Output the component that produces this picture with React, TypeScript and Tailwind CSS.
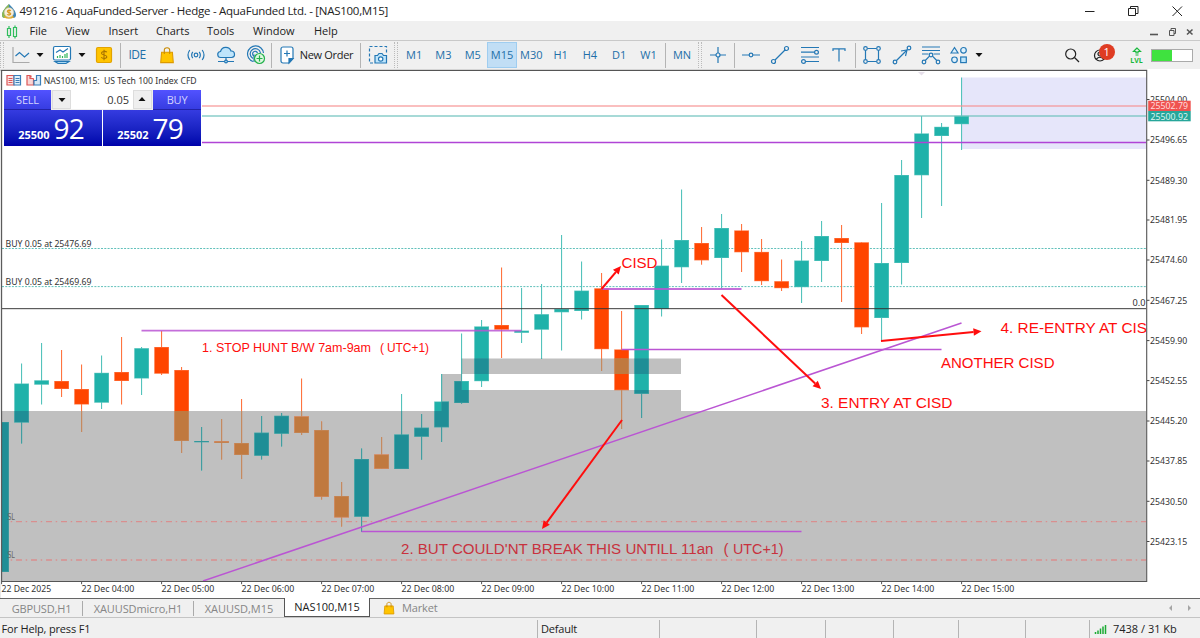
import { ReactNode } from 'react';
import clsx from 'clsx';

// center x, high, body top, body bottom, low, direction (1 = up)
const CANDLES: number[][] = [
  [1.5, 422, 422, 572, 572, 1],
  [21.5, 363.5, 383.5, 422.5, 443.5, 1],
  [41.5, 343, 380.3, 384.7, 404.5, 1],
  [61.5, 350, 381, 389, 397, 0],
  [81.5, 364.5, 389, 404.5, 432, 0],
  [101.5, 355.5, 372.8, 402.7, 409, 1],
  [121.5, 337, 372, 381, 404.5, 0],
  [141.5, 347, 348.2, 378.5, 395, 1],
  [161.5, 331, 347, 373.7, 375, 0],
  [181.5, 367, 370, 441, 453, 0],
  [201.5, 427, 441, 442.2, 470.5, 1],
  [221.5, 419, 441.3, 443, 459.5, 0],
  [241.5, 399, 443, 455, 479, 0],
  [261.5, 416, 432.7, 455.7, 459.5, 1],
  [281.5, 413, 415.8, 433.7, 446.5, 1],
  [301.5, 378.5, 416.4, 433, 435, 0],
  [321.5, 421.5, 430, 496.7, 499.5, 0],
  [341.5, 482, 496, 517.4, 526.5, 0],
  [361.5, 448.5, 459, 516.7, 532, 1],
  [381.5, 437, 454.5, 468.7, 468.7, 0],
  [401.5, 394, 434.5, 469, 469, 1],
  [421.5, 414, 427.7, 436.7, 459.7, 1],
  [441.5, 374, 401.5, 427.3, 442, 1],
  [461.5, 333.5, 381, 403, 403.7, 1],
  [481.5, 320, 326.4, 381.2, 387, 1],
  [501.5, 267.5, 325, 329.7, 358, 0],
  [521.5, 288, 330.6, 332.8, 343, 1],
  [541.5, 284, 314.2, 329.7, 359, 1],
  [561.5, 235, 309, 312.3, 350.5, 1],
  [581.5, 261.5, 290.6, 311, 319.5, 1],
  [601.5, 273, 288.3, 349.2, 371, 0],
  [621.5, 311, 349.4, 390.2, 429, 0],
  [641.5, 305, 305, 393.8, 418, 1],
  [661.5, 239.5, 265.6, 309, 316.5, 1],
  [681.5, 189.5, 240, 267.3, 283, 1],
  [701.5, 227, 243, 260.4, 264.7, 0],
  [721.5, 214, 228, 258, 288.5, 1],
  [741.5, 224, 230.4, 252.3, 272, 0],
  [761.5, 239, 251.9, 281.2, 285, 0],
  [781.5, 259.5, 281.2, 288.2, 291, 0],
  [801.5, 241, 260.5, 287.2, 303, 1],
  [821.5, 221, 236, 261, 282, 1],
  [841.5, 225, 238, 243, 302, 0],
  [861.5, 242.3, 242.3, 327.4, 334, 0],
  [881.5, 203, 263, 318, 341, 1],
  [901.5, 160, 175, 263, 284.5, 1],
  [921.5, 116, 133.4, 175.3, 218, 1],
  [941.5, 123, 126.8, 136, 206, 1],
  [961.5, 77.5, 115.8, 124.2, 150, 1],
];

const PRICES: [string, number][] = [
  ['25504.00', 99.5],
  ['25496.65', 140],
  ['25489.30', 180.3],
  ['25481.95', 220],
  ['25474.60', 260],
  ['25467.25', 300.3],
  ['25459.90', 340.6],
  ['25452.55', 380.6],
  ['25445.20', 421],
  ['25437.85', 461],
  ['25430.50', 501.3],
  ['25423.15', 541.5],
];

const TIMES = ['2025', '04:00', '05:00', '06:00', '07:00', '08:00', '09:00', '10:00', '11:00', '12:00', '13:00', '14:00', '15:00'];

// stepped session zone behind the candles
const ZONE = 'M2 411H441.6V374H461.6V358.4H681V374H461.6V390H681V411H1146V581H2Z';

type LabelProps = { x: number; y: number; w: number; size?: number; fill?: string; family?: string; children: string };

function Label({ x, y, w, size = 9, fill = '#333', family = 'Noto Sans, sans-serif', children }: LabelProps) {
  return (
    <text x={x} y={y} fontSize={size} fill={fill} textLength={w} lengthAdjust="spacingAndGlyphs" fontFamily={family}>
      {children}
    </text>
  );
}

function Note(props: LabelProps) {
  return <Label size={14.9} fill="#ff0d0d" family="Liberation Sans, Arial, sans-serif" {...props} />;
}

function Candles({ up, down, upWick, downWick }: { up: string; down: string; upWick: string; downWick: string }) {
  return (
    <g>
      {CANDLES.map(([x, high, top, bottom, low, dir]) => {
        const wick = dir ? upWick : downWick;
        return (
          <g key={x}>
            <rect x={x - 0.5} y={high} width={1.1} height={low - high} fill={wick} />
            <rect x={x - 7.3} y={top} width={14.8} height={bottom - top} fill={wick} />
            <rect x={x - 6.5} y={top + 0.6} width={13.2} height={Math.max(bottom - top - 1.2, 0.4)} fill={dir ? up : down} />
          </g>
        );
      })}
    </g>
  );
}

function Arrow({ x1, y1, x2, y2 }: { x1: number; y1: number; x2: number; y2: number }) {
  const len = Math.hypot(x2 - x1, y2 - y1);
  const ux = (x2 - x1) / len;
  const uy = (y2 - y1) / len;
  const bx = x2 - ux * 8;
  const by = y2 - uy * 8;
  return (
    <g fill="#ff0d0d" stroke="#ff0d0d">
      <line x1={x1} y1={y1} x2={bx} y2={by} strokeWidth={2} />
      <polygon stroke="none" points={`${x2},${y2} ${bx - uy * 3.8},${by + ux * 3.8} ${bx + uy * 3.8},${by - ux * 3.8}`} />
    </g>
  );
}

function Chart() {
  return (
    <svg width="1200" height="529" viewBox="0 69 1200 529" className="block">
      <defs>
        <clipPath id="zone">
          <path d={ZONE} />
        </clipPath>
        <clipPath id="plot">
          <rect x="2" y="71" width="1144.3" height="510" />
        </clipPath>
      </defs>
      <rect x="0" y="69" width="1200" height="529" fill="#fff" />
      <g clipPath="url(#plot)">
        <path d={ZONE} fill="#c0c0c0" />
        <rect x="961.6" y="77.5" width="185" height="71.5" fill="#e6e6fa" />
        <path d="M918 72h7l-3.5 3.5z" fill="#e6dfea" />
        <g stroke="#62c1bb" strokeDasharray="2 1.3">
          <path d="M2 248.5H1146" />
          <path d="M2 286.6H1146" />
        </g>
        <g stroke="#d98f8f" strokeWidth="1.3" strokeDasharray="6 3.7 1.5 3.8">
          <path d="M1 521.6H1146" />
          <path d="M1 560H1146" />
        </g>
        <Candles up="#20b2aa" down="#ff4500" upWick="#54c3bc" downWick="#ff7440" />
        <g clipPath="url(#zone)">
          <Candles up="#1f8e96" down="#c0793f" upWick="#419da1" downWick="#c48a60" />
        </g>
        <rect x="202" y="105.2" width="944" height="1.6" fill="#f78f8f" fillOpacity="0.7" />
        <rect x="202" y="115.2" width="944" height="1.6" fill="#6cc2bc" fillOpacity="0.75" />
        <rect x="2" y="308" width="1144" height="1.2" fill="#333" fillOpacity="0.8" />
        <g stroke="#ba55d3" fill="none">
          <path d="M202 142.5H1146" strokeWidth="1.4" stroke="#b044d6" />
          <path d="M141.5 330.7H521.5M601.5 289H741.5" strokeWidth="1.8" strokeOpacity="0.85" />
          <path d="M621.5 349.5H941.5" strokeWidth="1.4" />
          <path d="M361.5 531.5H801.5" strokeWidth="1.5" />
          <path d="M203 581L961.5 323" strokeWidth="1.5" />
        </g>
        <Arrow x1={601.5} y1={289} x2={621} y2={266} />
        <Arrow x1={622} y1={420} x2={542} y2={529} />
        <Arrow x1={721.5} y1={295} x2={821} y2={389} />
        <Arrow x1={881} y1={341} x2={981.5} y2={331.3} />
        <Note x={621.5} y={267.7} w={36}>CISD</Note>
        <Note x={202} y={351.8} w={169} size={12.2}>1. STOP HUNT B/W 7am-9am</Note>
        <Note x={380} y={351.8} w={4} size={12.2}>(</Note>
        <Note x={387} y={351.8} w={42} size={12.2}>UTC+1)</Note>
        <Note x={401} y={554.3} w={312.5} fill="#c8323e">2. BUT COULD'NT BREAK THIS UNTILL 11an</Note>
        <Note x={723.5} y={554.3} w={5} fill="#c8323e">(</Note>
        <Note x={733} y={554.3} w={50.5} fill="#c8323e">UTC+1)</Note>
        <Note x={941} y={368} w={113.5}>ANOTHER CISD</Note>
        <Note x={821} y={408} w={131.5}>3. ENTRY AT CISD</Note>
        <Note x={1000.5} y={332.7} w={146.5}>4. RE-ENTRY AT CIS</Note>
        <Label x={5.5} y={246.7} w={86}>BUY 0.05 at 25476.69</Label>
        <Label x={5.5} y={284.8} w={86}>BUY 0.05 at 25469.69</Label>
        <Label x={7.5} y={520} w={7.5} fill="#666">SL</Label>
        <Label x={7.5} y={558.3} w={7.5} fill="#666">SL</Label>
        <Label x={1132.5} y={306} w={13}>0.0</Label>
      </g>
      <path d="M0 70.4H1146.700V581.500H1.600V70.400" fill="none" stroke="#555" strokeWidth="1.1" />
      <path d="M0 69V598" stroke="#e4e4e4" strokeWidth="1.6" />

      {PRICES.map(([p, y]) => (
        <g key={p}>
          <path d={`M1147 ${y}h2.500`} stroke="#444" />
          <Label x={1150} y={y + 3.3} w={37.3}>{p}</Label>
        </g>
      ))}
      <rect x="1148.2" y="100.7" width="42.5" height="10.3" fill="#ef5350" />
      <rect x="1148.2" y="111" width="42.5" height="10.3" fill="#26a69a" />
      <Label x={1150.5} y={109.4} w={37.5} fill="#ffdada">25502.79</Label>
      <Label x={1150.5} y={119.6} w={37.5} fill="#d8f5f1">25500.92</Label>

      {TIMES.map((t, i) => (
        <g key={t}>
          <path d={`M${1.6 + i * 80} 582v2.200`} stroke="#555" />
          <Label x={1.5 + i * 80} y={592.4} w={i ? 52.7 : 49.7}>{`22 Dec ${t}`}</Label>
        </g>
      ))}

      {/* chart caption and its two toggles */}
      <g fill="none" strokeWidth="1.2">
        <path d="M14 75.5H7v9.500h7z" stroke="#dd5555" fill="#fbe4e4" />
        <path d="M14 75.5h6.500v9.500H14z" stroke="#3b7fb8" fill="#e2f0fa" />
        <path d="M8.500 78.500h4M8.500 80.500h4M8.500 82.500h4" stroke="#dd5555" strokeWidth="1" />
        <path d="M15.500 78.500h4M15.500 80.500h4M15.500 82.500h4" stroke="#3b7fb8" strokeWidth="1" />
        <path d="M33.500 78.500v6.500H27v-9.500h3v3h3.500M31 75.500v2" stroke="#dd5555" fill="#f8d6d6" />
        <path d="M34 80.500h2.500v-5h4v9.500H34z" stroke="#3b7fb8" fill="#d5e8f6" />
      </g>
      <Label x={43.7} y={84} w={56}>NAS100, M15:</Label>
      <Label x={104} y={84} w={92.7}>US Tech 100 Index CFD</Label>
    </svg>
  );
}

function TradePanel() {
  return (
    <div className="absolute top-[21px] left-1 h-14 w-[197px] bg-white">
      <div className="flex h-full gap-px">
        <Quote big="92" small="25500" />
        <Quote big="79" small="25502" />
      </div>
      <div className="absolute top-0 left-0 flex h-5 w-full">
        <div className="w-[47px] border-b border-[#2222a8] text-center text-[11px] leading-[20px] tracking-[-0.2px] text-[#d4d4ff]">SELL</div>
        <div className="flex h-5 w-[102px] border border-t-0 border-[#eee] bg-white">
          <div className="flex w-[19px] items-center justify-center border border-[#ddd] bg-[#efefef]"><Caret /></div>
          <div className="flex-1 pr-1 text-right text-[11px] leading-[19px] text-[#333]">0.05</div>
          <div className="flex w-[19px] rotate-180 items-center justify-center border border-[#ddd] bg-[#efefef]"><Caret /></div>
        </div>
        <div className="flex-1 border-b border-[#2222a8] text-center text-[11px] leading-[20px] tracking-[-0.2px] text-[#d4d4ff]">BUY</div>
      </div>
    </div>
  );
}

function Quote({ big, small }: { big: string; small: string }) {
  return (
    <div className="flex flex-1 items-end justify-center bg-gradient-to-b from-[#5252ff] to-[#0000aa] pr-1 pb-1 text-white">
      <span className="text-[11px] leading-[15px] font-bold">{small}</span>
      <span className="ml-1 text-[28px] leading-[28px] tracking-[-0.900px]">{big}</span>
    </div>
  );
}

function Caret() {
  return (
    <svg width="8" height="4" viewBox="0 0 8 4">
      <path d="M0.500 0h7L4 4z" fill="#111" />
    </svg>
  );
}

function Icon({ children, size = 20 }: { children: ReactNode; size?: number }) {
  return (
    <svg width={size} height={size} viewBox="0 0 20 20" fill="none" stroke="#2478b5" strokeWidth="1.2" className="shrink-0">
      {children}
    </svg>
  );
}

function Cell({ w, children }: { w: string; children?: ReactNode }) {
  return <div className={clsx('flex h-full shrink-0 items-center justify-center', w)}>{children}</div>;
}

function Sep({ w }: { w: string }) {
  return (
    <Cell w={w}>
      <div className="h-[25px] w-px bg-[#b4b4b4]" />
    </Cell>
  );
}

function Grip({ w }: { w: string }) {
  return (
    <Cell w={w}>
      <div className="h-[26px] w-1 border-x border-dotted border-[#bbb]" />
    </Cell>
  );
}

function Bag({ size = 20 }: { size?: number }) {
  return (
    <Icon size={size}>
      <path d="M4 7h12l1 11.500H3z" fill="#ffc400" stroke="#dd9a00" />
      <path d="M7 9V4.500C7 1 13 1 13 4.500V9" stroke="#c98a00" />
    </Icon>
  );
}

function Toolbar() {
  const frames = ['M1', 'M3', 'M5', 'M15', 'M30', 'H1', 'H4', 'D1', 'W1'];
  return (
    <div className="flex h-7 items-center bg-[#f0f0f0] text-[11px] text-[#226fa8]">
      <Cell w="w-3"><div className="mr-2 h-[26px] w-1 border-x border-dotted border-[#bbb]" /></Cell>
      <Cell w="w-[18px]">
        <Icon>
          <path d="M2 2v15.500h16.500" stroke="#aaa" />
          <path d="M4.500 11l4-3.500 5 4.500 4.500-4" />
        </Icon>
      </Cell>
      <Cell w="w-5"><Caret /></Cell>
      <Cell w="w-[23px]">
        <Icon>
          <rect x="1.500" y="1.500" width="17" height="13.500" rx="1.500" fill="#fff" />
          <path d="M3 16.500h14l-3 2H6z" fill="#a9d8f3" />
          <path d="M4 7.500l4-2.500 3 2 5-3.500" />
          <path d="M5.500 13v-2M8 13v-3M10.500 13v-2M13 13v-4M15 13v-5" stroke="#31b65a" />
        </Icon>
      </Cell>
      <Cell w="w-[17px]"><Caret /></Cell>
      <Cell w="w-7">
        <Icon>
          <rect x="2.500" y="2.500" width="15" height="15" rx="1.500" fill="#ffc400" stroke="#e2a300" />
          <path d="M12.800 7.300C12 6 7.500 6 7.500 8.300c0 2.300 5.300 1.200 5.300 3.500 0 2.200-4.500 2.200-5.500.5M10 4.800v10.400" stroke="#a87400" strokeWidth="1.1" />
        </Icon>
      </Cell>
      <Sep w="w-1" />
      <Cell w="w-[30px]"><span className="text-[12px] tracking-[-0.500px]">IDE</span></Cell>
      <Cell w="w-[30px]"><Bag size={18} /></Cell>
      <Cell w="w-7">
        <Icon>
          <circle cx="10" cy="10" r="1.800" />
          <path d="M6.800 6.800q-2.300 3.200 0 6.400M13.200 6.800q2.300 3.200 0 6.400M3.800 5q-3.600 5 0 10M16.200 5q3.600 5 0 10" />
        </Icon>
      </Cell>
      <Cell w="w-8">
        <Icon>
          <path d="M5 12.500a3 3 0 0 1-.5-6 5.500 5.500 0 0 1 10.500-.5 3.200 3.200 0 0 1 .5 6.500z" fill="#bfe5fb" />
          <path d="M10 12.500v4M2 16.500h16" />
          <circle cx="10" cy="16.500" r="1.400" fill="#bfe5fb" />
        </Icon>
      </Cell>
      <Cell w="w-7">
        <Icon>
          <path d="M7 16.500A8 8 0 1 1 17.500 8" />
          <path d="M7 13.500A5.200 5.200 0 1 1 14.500 8" />
          <path d="M8 11A2.500 2.500 0 1 1 11.500 8" />
          <path d="M8 9.500V17" />
          <circle cx="13.500" cy="13.500" r="5" fill="#dcf7df" stroke="#22b14c" />
          <path d="M13.500 10.500v6M10.500 13.500h6" stroke="#22b14c" />
        </Icon>
      </Cell>
      <Sep w="w-[3px]" />
      <Cell w="w-[27px]">
        <Icon>
          <path d="M4 4a2 2 0 0 1 2-2h8a2 2 0 0 1 2 2v9.500L12 18H6a2 2 0 0 1-2-2z" fill="#fff" />
          <path d="M16 13.500h-4V18z" fill="#2478b5" />
          <path d="M10 5.500v6M7 8.500h6" />
        </Icon>
      </Cell>
      <Cell w="w-[58px]"><span className="mr-[5px] text-[11px] tracking-[-0.300px] whitespace-nowrap text-[#222]">New Order</span></Cell>
      <Sep w="w-[5px]" />
      <Cell w="w-[29px]">
        <Icon>
          <path d="M5 18H1.500V1.500h17V9" strokeDasharray="3 2" />
          <path d="M7 10.500h2.500l1.500-2h3l1.500 2H18.500V18H7z" fill="#bfe5fb" />
          <circle cx="12.700" cy="14" r="2.200" fill="#fff" />
        </Icon>
      </Cell>
      <Grip w="w-[7.5px]" />
      {frames.map((f) => (
        <div
          key={f}
          className={clsx('flex h-[26px] w-[29.3px] shrink-0 items-center justify-center', f === 'M15' && 'border border-[#9fcdf0] bg-[#c1def5]')}
        >
          {f}
        </div>
      ))}
      <Sep w="w-[3.8px]" />
      <Cell w="w-[30px]">MN</Cell>
      <Grip w="w-1.5" />
      <Cell w="w-[30px]">
        <Icon><path d="M10 2v6M10 12v6M2 10h6M12 10h6" /><circle cx="10" cy="10" r="2" /></Icon>
      </Cell>
      <Sep w="w-[3px]" />
      <Cell w="w-[30px]">
        <Icon><path d="M1 10h7M12 10h7" /><circle cx="10" cy="10" r="1.800" /></Icon>
      </Cell>
      <Cell w="w-[29px]">
        <Icon><path d="M5 15L15 5" /><circle cx="3.500" cy="16.500" r="2" /><circle cx="16.500" cy="3.500" r="2" /></Icon>
      </Cell>
      <Cell w="w-[30px]">
        <Icon>
          <path d="M1 2.500h18M1 7.200h13.500M1 12h18M5.500 16.500H19" />
          <circle cx="16.500" cy="7.200" r="1.900" /><circle cx="3.500" cy="16.500" r="1.900" />
        </Icon>
      </Cell>
      <Cell w="w-7">
        <Icon><path d="M4 6V3.800h12V6M10 4v12.500" /></Icon>
      </Cell>
      <Sep w="w-[5px]" />
      <Cell w="w-[29px]">
        <Icon>
          <path d="M5.500 3.500h9M5.500 16.500h9M3.500 5.500v9M16.500 5.500v9" />
          <circle cx="3.500" cy="3.500" r="1.800" /><circle cx="16.500" cy="3.500" r="1.800" />
          <circle cx="3.500" cy="16.500" r="1.800" /><circle cx="16.500" cy="16.500" r="1.800" />
        </Icon>
      </Cell>
      <Cell w="w-[30px]">
        <Icon>
          <path d="M4.500 15.500L15 5" /><path d="M9 6l6-1-1.500 6" />
          <circle cx="3" cy="17" r="1.800" /><circle cx="17" cy="3" r="1.800" />
        </Icon>
      </Cell>
      <Cell w="w-[29px]">
        <Icon>
          <path d="M1 2h18M1 5.500h18M1 9h6.500M12.500 9H19M4.300 15.500l4.200-4.300M11.500 11.200l4.200 4.300" />
          <circle cx="10" cy="10" r="1.800" /><circle cx="3" cy="17" r="1.800" /><circle cx="17" cy="17" r="1.800" />
        </Icon>
      </Cell>
      <Cell w="w-[27px]">
        <Icon>
          <g fill="#dff1fc">
            <path d="M2 8l3.500-5.500L9 8z" /><circle cx="14.500" cy="5.300" r="2.800" />
            <circle cx="5.500" cy="14.800" r="2.800" /><rect x="11.700" y="12" width="5.600" height="5.600" fill="#bfe5fb" />
          </g>
        </Icon>
      </Cell>
      <Cell w="w-3"><Caret /></Cell>
      <div className="ml-auto flex h-full items-center pr-[7px]">
        <Cell w="w-8">
          <Icon><g stroke="#222"><circle cx="8.700" cy="9" r="5" /><path d="M12.500 12.500L17 17" /></g></Icon>
        </Cell>
        <div className="relative flex h-full w-8 items-center pl-[3px]">
          <Icon>
            <g stroke="#222"><circle cx="9" cy="10.500" r="5.500" /><circle cx="9" cy="9" r="2" /><path d="M5 14.500q4-4.500 8 0" /></g>
          </Icon>
          <span className="absolute top-[3px] left-[11px] h-[15.5px] w-[15.5px] rounded-full bg-[#df3c23] text-center text-[11px] leading-[15px] text-white">1</span>
        </div>
        <div className="flex w-[31px] flex-col items-center pl-[2px]">
          <svg width="10" height="9" viewBox="0 0 10 9" fill="none" stroke="#18b83c" strokeWidth="1.2">
            <path d="M5 1L1.500 4.500H4V6h2V4.500h2.500zM3.500 8h3" />
          </svg>
          <span className="mt-px text-[7px] leading-[7px] font-bold text-[#18b83c]">LVL</span>
        </div>
        <div className="h-[13px] w-[42px] border border-[#aaa] bg-white"><div className="h-full w-5 bg-[#3fe23f]" /></div>
      </div>
    </div>
  );
}

function TitleBar() {
  return (
    <div className="flex h-[21px] items-center bg-white text-[#222]">
      <svg width="16" height="16" viewBox="0 0 16 16" className="ml-px">
        <path d="M8 1C11 4 15 8 15 12q0 3-3 3H4q-3 0-3-3C1 8 5 4 8 1z" fill="#3f86b5" />
        <path d="M8 1C5 4 1 8 1 12q0 3 3 3h3z" fill="#8fb94f" />
        <path d="M3 14.500q5 2.500 10 0l-2-3H5z" fill="#e2ad2f" />
        <circle cx="8" cy="9.500" r="4.700" fill="#f5eedc" stroke="#d3c9ad" strokeWidth="0.6" />
        <path d="M9.800 7.800c-.8-1-3.500-.8-3.500.7s3.500.8 3.500 2.300-2.900 1.600-3.700.5M8 6.300v6.500" fill="none" stroke="#d8981d" strokeWidth="1.1" />
      </svg>
      <span className="ml-[2.5px] text-[11.5px] tracking-[-0.27px] whitespace-nowrap">
        491216 - AquaFunded-Server - Hedge - AquaFunded Ltd. - [NAS100,M15]
      </span>
      <svg width="100" height="20" viewBox="1084 0 100 20" fill="none" stroke="#222" className="mr-4 ml-auto">
        <path d="M1085 10.500h9.500M1128.500 7.500h7v7h-7zM1130.500 7V5.500h7.500v7h-2M1172.500 5.500l9.500 9.500M1182 5.500l-9.500 9.500" />
      </svg>
    </div>
  );
}

function MenuBar() {
  return (
    <div className="flex h-5 items-center border-b border-[#c9c9c9] bg-[#f0f0f0] pt-0.5 text-[11px] text-[#222]">
      <svg width="12" height="16" viewBox="0 0 12 16" fill="none" stroke="#2fbd5c" strokeWidth="1.2" className="ml-1.5">
        <path d="M1.500 4.500h3v7h-3zM3 2v2.500M3 11.500V14M7.500 3.500h3v9h-3zM9 1.500v2M9 12.500v2" />
      </svg>
      <span className="ml-[11.5px] w-9">File</span>
      <span className="w-[43px]">View</span>
      <span className="w-[47.5px]">Insert</span>
      <span className="w-[51px]">Charts</span>
      <span className="w-[46px]">Tools</span>
      <span className="w-[61px]">Window</span>
      <span>Help</span>
      <svg width="46" height="16" viewBox="1149 23 46 16" fill="none" stroke="#555" className="mr-[5px] ml-auto">
        <path d="M1150 33.500h8" strokeWidth="1.6" />
        <path d="M1169.500 29.500h4.500v5h-4.500zM1171 29.500v-2h4.500v5h-1.500" />
        <path d="M1187 28.500l5.500 5M1192.500 28.500l-5.500 5" strokeWidth="1.6" />
      </svg>
    </div>
  );
}

function Tabs() {
  return (
    <div className="flex h-[20px] items-center border-t border-b border-t-[#666] border-b-[#c4c4c4] bg-[#f0f0f0] text-[11px] text-[#868686]">
      <div className="flex w-[83px] justify-center border-r border-[#aaa] pl-px leading-[15px] tracking-[-0.15px]">GBPUSD,H1</div>
      <div className="flex w-[111px] justify-center border-r border-[#aaa] leading-[15px] tracking-[-0.1px]">XAUUSDmicro,H1</div>
      <div className="flex w-[90px] justify-center leading-[15px]">XAUUSD,M15</div>
      <div className="-mt-px flex h-[19px] w-[86px] items-center justify-center border border-t-0 border-[#555] bg-white pt-px text-[#222]">
        NAS100,M15
      </div>
      <div className="ml-3"><Bag size={14} /></div>
      <span className="ml-[6px] tracking-[-0.15px]">Market</span>
      <svg width="24" height="8" viewBox="0 0 24 8" fill="#a5a5a5" className="mr-[8px] ml-auto">
        <path d="M4 1v6L1 4zM20 1v6l3-3z" />
      </svg>
    </div>
  );
}

function StatusBar() {
  return (
    <div className="flex h-5 items-center bg-[#f0f0f0] pt-0.5 text-[11px] text-[#222]">
      <div className="w-[537px] pl-[1.5px] tracking-[-0.17px]">For Help, press F1</div>
      <div className="h-[18px] w-[123px] border-x border-[#b4b4b4] pl-[3px] leading-[18px] tracking-[-0.2px]">Default</div>
      <div className="h-[18px] w-[97px] border-r border-[#b4b4b4]" />
      <div className="h-[18px] w-[69px] border-r border-[#b4b4b4]" />
      <div className="h-[18px] w-[68px] border-r border-[#b4b4b4]" />
      <div className="h-[18px] w-[65px] border-r border-[#b4b4b4]" />
      <div className="h-[18px] w-[67px] border-r border-[#b4b4b4]" />
      <div className="h-[18px] w-[64px] border-r border-[#b4b4b4]" />
      <svg width="13" height="10" viewBox="0 0 13 10" stroke="#1cab34" strokeWidth="1.5" className="ml-1">
        <path d="M1.500 10V8M4 10V6.500M6.500 10V4.500M9 10V2.500M11.500 10V1" />
      </svg>
      <span className="ml-[6px]">7438 / 31 Kb</span>
    </div>
  );
}

export default function App() {
  return (
    <div className="flex h-[638px] w-[1200px] flex-col overflow-hidden bg-white font-['Open_Sans','Noto_Sans',sans-serif]">
      <TitleBar />
      <MenuBar />
      <Toolbar />
      <div className="relative h-[529px] shrink-0">
        <Chart />
        <TradePanel />
      </div>
      <Tabs />
      <StatusBar />
    </div>
  );
}
